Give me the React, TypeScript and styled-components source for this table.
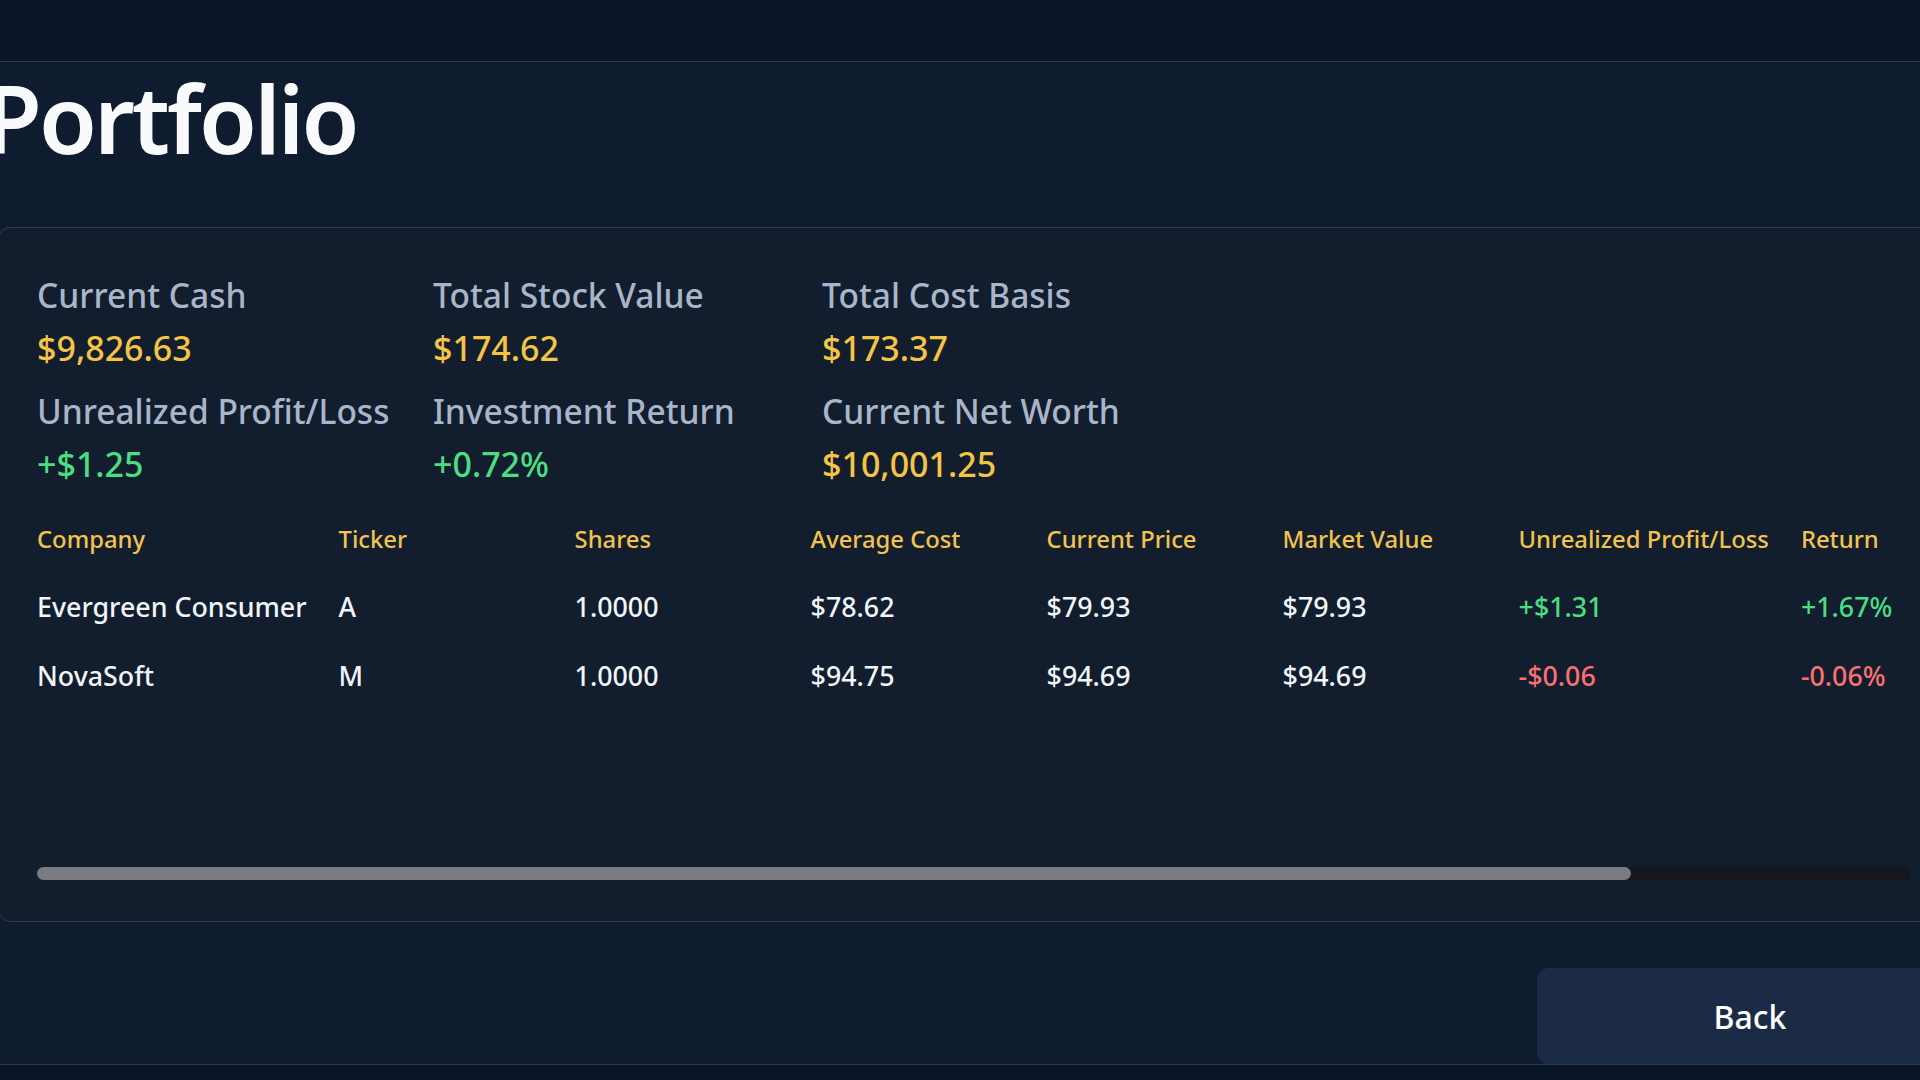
import { FC } from "react"
import styled, { createGlobalStyle } from "styled-components"

type Tone = "plain" | "gold" | "gain" | "loss"

const toneColor = (tone: Tone) => {
  if (tone == "gold") return "#f4c545"
  if (tone == "gain") return "#4ade80"
  if (tone == "loss") return "#f87171"
  return "#f1f5f9"
}

const GlobalStyle = createGlobalStyle`
  html, body {
    margin: 0;
    padding: 0;
    background: #0f1b2e;
    overflow: hidden;
  }
  body {
    font-family: "Noto Sans", "Open Sans", sans-serif;
    color: #f1f5f9;
  }
`

const Screen = styled.div`
  display: flex;
  flex-direction: column;
  min-height: 100vh;
  background: #0f1b2e;
`

const TopBar = styled.div`
  height: 61px;
  flex-shrink: 0;
  background: #0a1528;
  border-bottom: 1px solid #2b3a52;
`

const Main = styled.main`
  width: 1952px;
  margin-left: -2px;
  flex-shrink: 0;
`

const Title = styled.h1`
  margin: 0 0 0 -14px;
  font-size: 94px;
  font-weight: 600;
  letter-spacing: -0.031em;
  line-height: 113px;
  color: #f8fafc;
`

const Panel = styled.section`
  margin-top: 52px;
  padding: 47px 39px 41px 38px;
  background: #121d2e;
  border: 1px solid #2c3c55;
  border-radius: 12px;
`

const StatsGrid = styled.div`
  display: grid;
  grid-template-columns: 396px 389px 1fr;
  row-gap: 21px;
`

const StatBlock = styled.div`
  display: flex;
  flex-direction: column;
  gap: 11px;
`

const StatLabel = styled.div`
  font-size: 33.5px;
  font-weight: 500;
  line-height: 40px;
  color: #a9b6c9;
  white-space: nowrap;
`

const StatValue = styled.div<{ $tone: Tone }>`
  font-size: 34px;
  font-weight: 500;
  line-height: 44px;
  color: ${(p) => toneColor(p.$tone)};
`

const TableScroll = styled.div`
  margin-top: 37px;
  min-height: 344px;
  overflow: hidden;
`

const HoldingsGrid = styled.div`
  display: grid;
  grid-template-columns: repeat(8, minmax(204px, max-content));
  column-gap: 32px;
  width: max-content;
`

const HeadCell = styled.div`
  padding-bottom: 16px;
  font-size: 23.8px;
  font-weight: 500;
  line-height: 32px;
  color: #f2c44d;
  white-space: nowrap;
`

const Cell = styled.div<{ $tone: Tone }>`
  padding: 18px 0 15px;
  font-size: 26.8px;
  font-weight: 500;
  line-height: 36px;
  color: ${(p) => toneColor(p.$tone)};
  white-space: nowrap;
`

const ScrollTrack = styled.div`
  height: 13px;
  border-radius: 7px;
  background: #14171e;
`

const ScrollThumb = styled.div<{ $ratio: number }>`
  width: ${(p) => p.$ratio * 100}%;
  height: 100%;
  border-radius: 7px;
  background: #7a7c81;
`

const Actions = styled.div`
  display: flex;
  justify-content: flex-end;
  margin-top: 46px;
`

const BackButton = styled.button`
  width: 426px;
  height: 96px;
  margin-right: -13px;
  border: none;
  border-radius: 12px;
  background: #1c2b45;
  font-family: inherit;
  font-size: 32px;
  font-weight: 500;
  color: #ffffff;
  cursor: pointer;
`

const BottomBar = styled.div`
  flex: 1;
  min-height: 14px;
  background: #0a1527;
  border-top: 1px solid #2b3a52;
`

interface Stat {
  label: string
  value: string
  tone: Tone
}

const stats: Stat[] = [
  { label: "Current Cash", value: "$9,826.63", tone: "gold" },
  { label: "Total Stock Value", value: "$174.62", tone: "gold" },
  { label: "Total Cost Basis", value: "$173.37", tone: "gold" },
  { label: "Unrealized Profit/Loss", value: "+$1.25", tone: "gain" },
  { label: "Investment Return", value: "+0.72%", tone: "gain" },
  { label: "Current Net Worth", value: "$10,001.25", tone: "gold" },
]

const columns = ["Company", "Ticker", "Shares", "Average Cost", "Current Price", "Market Value", "Unrealized Profit/Loss", "Return"]

interface Holding {
  company: string
  ticker: string
  shares: string
  avgCost: string
  price: string
  value: string
  pnl: string
  ret: string
}

const holdings: Holding[] = [
  { company: "Evergreen Consumer", ticker: "A", shares: "1.0000", avgCost: "$78.62", price: "$79.93", value: "$79.93", pnl: "+$1.31", ret: "+1.67%" },
  { company: "NovaSoft", ticker: "M", shares: "1.0000", avgCost: "$94.75", price: "$94.69", value: "$94.69", pnl: "-$0.06", ret: "-0.06%" },
]

const signTone = (s: string): Tone => (s.startsWith("-") ? "loss" : "gain")

const App: FC = () => {
  return (
    <Screen>
      <GlobalStyle />
      <TopBar />
      <Main>
        <Title>Portfolio</Title>
        <Panel>
          <StatsGrid>
            {stats.map((s) => (
              <StatBlock key={s.label}>
                <StatLabel>{s.label}</StatLabel>
                <StatValue $tone={s.tone}>{s.value}</StatValue>
              </StatBlock>
            ))}
          </StatsGrid>
          <TableScroll>
            <HoldingsGrid>
              {columns.map((c) => (
                <HeadCell key={c}>{c}</HeadCell>
              ))}
              {holdings.map((h) => [
                <Cell key={h.company + "c"} $tone="plain">{h.company}</Cell>,
                <Cell key={h.company + "t"} $tone="plain">{h.ticker}</Cell>,
                <Cell key={h.company + "s"} $tone="plain">{h.shares}</Cell>,
                <Cell key={h.company + "a"} $tone="plain">{h.avgCost}</Cell>,
                <Cell key={h.company + "p"} $tone="plain">{h.price}</Cell>,
                <Cell key={h.company + "v"} $tone="plain">{h.value}</Cell>,
                <Cell key={h.company + "l"} $tone={signTone(h.pnl)}>{h.pnl}</Cell>,
                <Cell key={h.company + "r"} $tone={signTone(h.ret)}>{h.ret}</Cell>,
              ])}
            </HoldingsGrid>
          </TableScroll>
          <ScrollTrack>
            <ScrollThumb $ratio={0.851} />
          </ScrollTrack>
        </Panel>
        <Actions>
          <BackButton>Back</BackButton>
        </Actions>
      </Main>
      <BottomBar />
    </Screen>
  )
}

export default App
